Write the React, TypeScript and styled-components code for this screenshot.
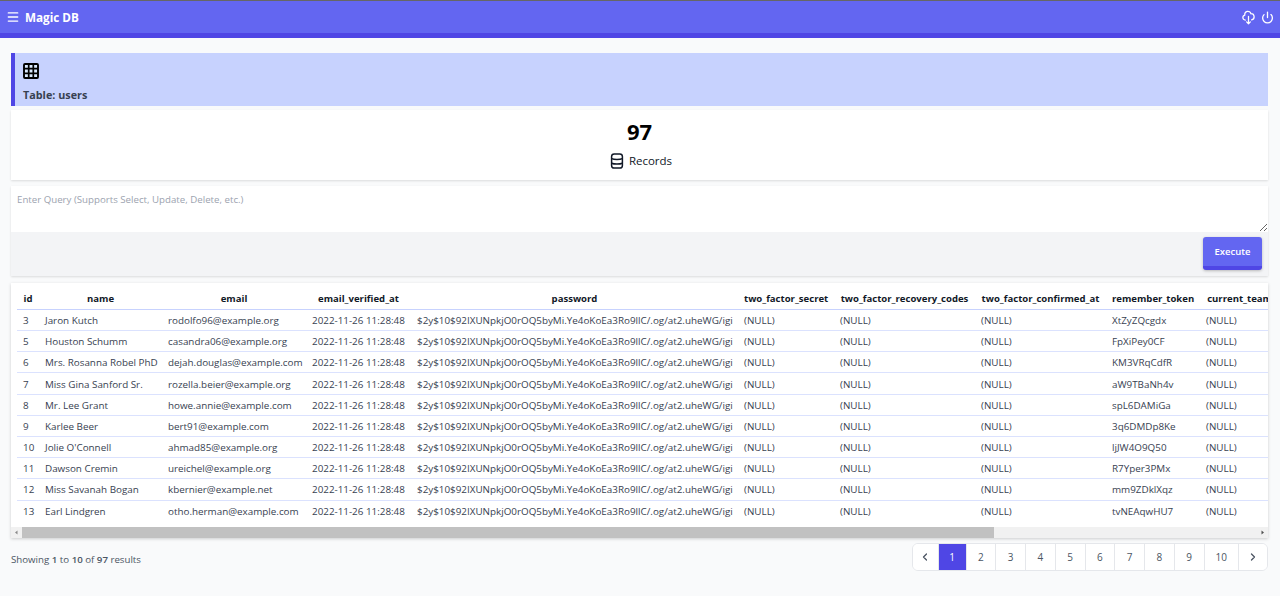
import React, { FC } from 'react';
import styled, { createGlobalStyle } from 'styled-components';
import { Menu, Power, ChevronLeft, ChevronRight } from 'lucide-react';
import { HiOutlineCloudDownload } from 'react-icons/hi';

const PASSWORD = '$2y$10$92IXUNpkjO0rOQ5byMi.Ye4oKoEa3Ro9llC/.og/at2.uheWG/igi';
const VERIFIED = '2022-11-26 11:28:48';

const columns = [
  { name: 'id', width: 22 },
  { name: 'name', width: 123 },
  { name: 'email', width: 144 },
  { name: 'email_verified_at', width: 105 },
  { name: 'password', width: 327 },
  { name: 'two_factor_secret', width: 96 },
  { name: 'two_factor_recovery_codes', width: 141 },
  { name: 'two_factor_confirmed_at', width: 131 },
  { name: 'remember_token', width: 94 },
  { name: 'current_team_id', width: 92 },
  { name: 'profile_photo_path', width: 114 },
  { name: 'created_at', width: 102 },
  { name: 'updated_at', width: 100 },
];

const users = [
  [3, 'Jaron Kutch', 'rodolfo96@example.org', 'XtZyZQcgdx'],
  [5, 'Houston Schumm', 'casandra06@example.org', 'FpXiPey0CF'],
  [6, 'Mrs. Rosanna Robel PhD', 'dejah.douglas@example.com', 'KM3VRqCdfR'],
  [7, 'Miss Gina Sanford Sr.', 'rozella.beier@example.org', 'aW9TBaNh4v'],
  [8, 'Mr. Lee Grant', 'howe.annie@example.com', 'spL6DAMiGa'],
  [9, 'Karlee Beer', 'bert91@example.com', '3q6DMDp8Ke'],
  [10, "Jolie O'Connell", 'ahmad85@example.org', 'ljJW4O9Q50'],
  [11, 'Dawson Cremin', 'ureichel@example.org', 'R7Yper3PMx'],
  [12, 'Miss Savanah Bogan', 'kbernier@example.net', 'mm9ZDklXqz'],
  [13, 'Earl Lindgren', 'otho.herman@example.com', 'tvNEAqwHU7'],
];

const pages = ['1', '2', '3', '4', '5', '6', '7', '8', '9', '10'];

const pageWidth = (p: string) => {
  if (p === '1') return 28;
  if (p === '10') return 34.5;
  return 29.75;
};

const App: FC = () => {
  return (
    <>
      <GlobalStyle />
      <TopBar>
        <Brand>
          <Menu size={14} strokeWidth={2.4} />
          <span>Magic DB</span>
        </Brand>
        <TopActions>
          <HiOutlineCloudDownload size={15} />
          <Power size={13} strokeWidth={2.4} />
        </TopActions>
      </TopBar>

      <Main>
        <TableBanner>
          <GridIcon viewBox="0 0 16 16">
            <rect x="1" y="1" width="14" height="14" rx="1" fill="#dbeafe" stroke="#000" strokeWidth="1.9" />
            <path d="M1 5.7h14M1 10.3h14M5.7 1v14M10.3 1v14" stroke="#000" strokeWidth="1.7" fill="none" />
          </GridIcon>
          <BannerTitle>Table: users</BannerTitle>
        </TableBanner>

        <StatsCard>
          <StatValue>97</StatValue>
          <StatLabel>
            <DbIcon viewBox="0 0 14 16">
              <rect x="1.6" y="1" width="10.8" height="14" rx="2.6" fill="none" stroke="#111827" strokeWidth="1.5" />
              <path d="M1.6 5.6c2.5 1.2 8.3 1.2 10.8 0M1.6 10.2c2.5 1.2 8.3 1.2 10.8 0" fill="none" stroke="#111827" strokeWidth="1.5" />
            </DbIcon>
            Records
          </StatLabel>
        </StatsCard>

        <QueryCard>
          <QueryInput placeholder="Enter Query (Supports Select, Update, Delete, etc.)" />
          <QueryFooter>
            <ExecuteButton>Execute</ExecuteButton>
          </QueryFooter>
        </QueryCard>

        <TableCard>
          <Scroller>
            <DataTable>
              <colgroup>
                {columns.map((c) => (
                  <Col key={c.name} $width={c.width} />
                ))}
              </colgroup>
              <thead>
                <tr>
                  {columns.map((c) => (
                    <Th key={c.name}>{c.name}</Th>
                  ))}
                </tr>
              </thead>
              <tbody>
                {users.map(([id, name, email, token]) => (
                  <tr key={id}>
                    <Td>{id}</Td>
                    <Td>{name}</Td>
                    <Td>{email}</Td>
                    <Td>{VERIFIED}</Td>
                    <Td>{PASSWORD}</Td>
                    <Td>(NULL)</Td>
                    <Td>(NULL)</Td>
                    <Td>(NULL)</Td>
                    <Td>{token}</Td>
                    <Td>(NULL)</Td>
                    <Td>(NULL)</Td>
                    <Td>{VERIFIED}</Td>
                    <Td>{VERIFIED}</Td>
                  </tr>
                ))}
              </tbody>
            </DataTable>
          </Scroller>
          <ScrollTrack>
            <ScrollArrow viewBox="0 0 11 11">
              <path d="M6.5 3.5v4l-2.5-2z" fill="#8a8a8a" />
            </ScrollArrow>
            <ScrollThumb />
            <ScrollArrow viewBox="0 0 11 11">
              <path d="M4.5 3.5v4l2.5-2z" fill="#505050" />
            </ScrollArrow>
          </ScrollTrack>
        </TableCard>

        <PagerRow>
          <Summary>
            Showing <b>1</b> to <b>10</b> of <b>97</b> results
          </Summary>
          <Pager>
            <PageButton $width={26}>
              <ChevronLeft size={12} strokeWidth={2.6} />
            </PageButton>
            {pages.map((p) => (
              <PageButton key={p} $active={p === '1'} $width={pageWidth(p)}>
                {p}
              </PageButton>
            ))}
            <PageButton $width={28}>
              <ChevronRight size={12} strokeWidth={2.6} />
            </PageButton>
          </Pager>
        </PagerRow>
      </Main>
    </>
  );
};

const GlobalStyle = createGlobalStyle`
  * {
    box-sizing: border-box;
  }

  html,
  body {
    margin: 0;
    background: #f9fafb;
    font-family: 'Open Sans', 'Noto Sans', sans-serif;
  }
`;

const TopBar = styled.header`
  height: 38px;
  padding: 0 6px;
  display: flex;
  align-items: center;
  justify-content: space-between;
  color: #fff;
  background: #6366f1;
  border-top: 1px solid #666;
  border-bottom: 5px solid #4f46e5;
`;

const Brand = styled.div`
  display: flex;
  align-items: center;
  gap: 5px;
  font-size: 11.7px;
  font-weight: 700;
`;

const TopActions = styled.div`
  display: flex;
  align-items: center;
  gap: 5px;
`;

const Main = styled.main`
  padding: 15px 12px 0 11px;
`;

const TableBanner = styled.section`
  height: 53px;
  padding: 10px 0 0 8px;
  background: #c7d2fe;
  border-left: 4px solid #4f46e5;
`;

const GridIcon = styled.svg`
  display: block;
  width: 16px;
  height: 16px;
`;

const BannerTitle = styled.h2`
  margin: 9px 0 0;
  font-size: 10.8px;
  line-height: 14px;
  font-weight: 700;
  color: #374151;
`;

const StatsCard = styled.section`
  height: 70px;
  margin-top: 4px;
  padding-top: 7px;
  display: flex;
  flex-direction: column;
  align-items: center;
  background: #fff;
  box-shadow: 0 1px 2px rgba(0, 0, 0, 0.12);
`;

const StatValue = styled.div`
  font-size: 22px;
  line-height: 28px;
  font-weight: 700;
  color: #000;
`;

const StatLabel = styled.div`
  margin-top: 8px;
  padding-left: 1px;
  display: flex;
  align-items: center;
  gap: 5px;
  font-size: 11.5px;
  line-height: 16px;
  color: #111827;
`;

const DbIcon = styled.svg`
  width: 14px;
  height: 16px;
  margin-left: 2px;
`;

const QueryCard = styled.section`
  margin-top: 6px;
  background: #fff;
  box-shadow: 0 1px 2px rgba(0, 0, 0, 0.12);
`;

const QueryInput = styled.textarea`
  display: block;
  width: 100%;
  height: 46px;
  padding: 7px 6px;
  border: 0;
  outline: 0;
  font-family: inherit;
  font-size: 9.7px;
  color: #374151;

  &::placeholder {
    color: #9ca3af;
  }
`;

const QueryFooter = styled.div`
  height: 44px;
  padding: 5px 6px 0 0;
  display: flex;
  justify-content: flex-end;
  align-items: flex-start;
  background: #f3f4f6;
`;

const ExecuteButton = styled.button`
  width: 59px;
  height: 33px;
  padding: 0;
  color: #fff;
  font-family: inherit;
  font-size: 9.5px;
  font-weight: 600;
  background: #6366f1;
  border: 0;
  border-bottom: 4px solid #4f46e5;
  border-radius: 3px;
  box-shadow: 0 1px 3px rgba(0, 0, 0, 0.25);
`;

const TableCard = styled.section`
  margin-top: 7px;
  background: #fff;
  box-shadow: 0 1px 3px rgba(0, 0, 0, 0.18);
`;

const Scroller = styled.div`
  padding: 5px 0 6px 6px;
  overflow: hidden;
`;

const ScrollTrack = styled.div`
  height: 11px;
  display: flex;
  justify-content: space-between;
  background: #f1f1f1;
`;

const ScrollArrow = styled.svg`
  flex: none;
  width: 11px;
  height: 11px;
`;

const ScrollThumb = styled.div`
  flex: none;
  width: 972px;
  margin-right: auto;
  background: #c1c1c1;
`;

const DataTable = styled.table`
  width: 1591px;
  table-layout: fixed;
  border-collapse: collapse;
  font-size: 9.85px;
`;

const Col = styled.col<{ $width: number }>`
  width: ${({ $width }) => $width}px;
`;

const Th = styled.th`
  height: 21.4px;
  padding: 1px 6px 0;
  white-space: nowrap;
  text-align: center;
  font-size: 9.55px;
  font-weight: 700;
  color: #111827;
  border-bottom: 1px solid #c7d2fe;
`;

const Td = styled.td`
  height: 21.2px;
  padding: 0 6px;
  white-space: nowrap;
  overflow: hidden;
  color: #374151;
  border-bottom: 1px solid #dbe2fe;

  tr:last-child & {
    border-bottom: 0;
  }
`;

const PagerRow = styled.footer`
  margin-top: 5px;
  display: flex;
  align-items: center;
  justify-content: space-between;
`;

const Summary = styled.p`
  margin: 0;
  padding-top: 4px;
  font-size: 9.7px;
  color: #4b5563;

  b {
    font-weight: 600;
  }
`;

const Pager = styled.nav`
  display: flex;
  height: 28px;
  overflow: hidden;
  background: #fff;
  border: 1px solid #e5e7eb;
  border-radius: 6px;
`;

const PageButton = styled.button<{ $active?: boolean; $width: number }>`
  flex: none;
  width: ${({ $width }) => $width}px;
  padding: 0;
  display: flex;
  align-items: center;
  justify-content: center;
  font-family: inherit;
  font-size: 10px;
  font-weight: 500;
  color: ${({ $active }) => ($active ? '#fff' : '#4b5563')};
  background: ${({ $active }) => ($active ? '#4f46e5' : '#fff')};
  border: 0;
  border-right: 1px solid #e5e7eb;

  &:last-child {
    border-right: 0;
  }
`;

export default App;
